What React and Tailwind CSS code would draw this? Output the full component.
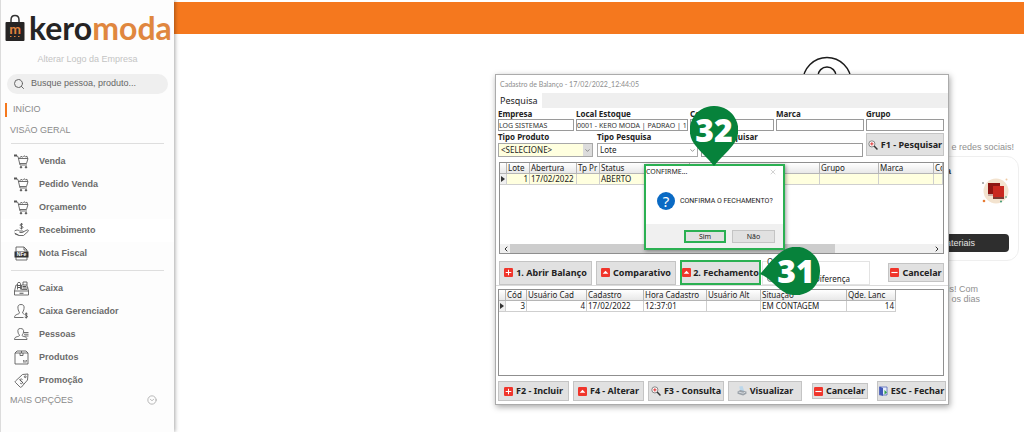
import { ChevronDown, CircleChevronDown, Search, X } from 'lucide-react';

const NOTO = "font-['Noto_Sans','Open_Sans',sans-serif]";

function MenuSvg({ children }) {
    return (
        <svg viewBox="0 0 30 30" className="h-[15px] w-[15px] shrink-0" fill="none" stroke="#555" strokeWidth="1.7" aria-hidden="true">
            {children}
        </svg>
    );
}

function CartIcon() {
    return (
        <MenuSvg>
            <path d="M5 3.5 8 5l4 17h14" />
            <path d="M9 9h19l-3 10H11.500" />
            <path d="M11 8.500l3-4 3 2 3-3 3 2 3-1 1 4" />
            <path d="M0 3h6" strokeWidth="4" />
            <circle cx="14" cy="26.500" r="1.600" fill="#333" />
            <circle cx="24" cy="26.500" r="1.600" fill="#333" />
        </MenuSvg>
    );
}

function HandMoneyIcon() {
    return (
        <MenuSvg>
            <path d="M18 3c-2-2-6-1-6 1.200 0 3 6 1.500 6 4.500 0 2.300-4.500 3-6.500 1M15 0v13" />
            <path d="M1 16c4-3 8-2 10 0h6c2 0 2 3 0 3h-6M18 18l8-4c2-1 4 1 2 3l-9 8H10l-8-3M1 20l8 4" />
        </MenuSvg>
    );
}

function NfeIcon() {
    return (
        <MenuSvg>
            <path d="M4 12V2h16l6 6v4M4 22v6h22v-6M20 2v6h6" />
            <rect x="1" y="11" width="28" height="12" fill="#333" stroke="none" />
            <text x="15" y="20.500" textAnchor="middle" fontSize="10" fontWeight="700" fontFamily="Liberation Sans, sans-serif" fill="#fff" stroke="none">NFe</text>
        </MenuSvg>
    );
}

function RegisterIcon() {
    return (
        <MenuSvg>
            <path d="M1 20h28v8H1zM1 20l3-12h4M29 20l-2-9" />
            <path d="M7 17V5c0-3 6-3 6 0v12M15 17V8h11v9zM18 8V2h8v6" />
            <path d="M7 9h6M7 13h6M17 11h7M17 14h7M11 24.500h8" strokeWidth="2" />
        </MenuSvg>
    );
}

function PersonMoneyIcon() {
    return (
        <MenuSvg>
            <path d="M14 1c-5 0-7 3-6 8 0 4 3 7 3 9-1 3-10 2-10 9h18M14 1c5 0 7 3 6 8 0 4-3 7-3 9 1 1 2 1.500 3 2" />
            <path d="M27 20c-2-1.500-5-1-5 1s5 1.500 5 4-3.500 2.500-5.500 1M24.500 17v12" strokeWidth="2" />
        </MenuSvg>
    );
}

function PersonListIcon() {
    return (
        <MenuSvg>
            <path d="M13 3c-5 0-6 3-5 7 0 4 3 5 3 7-1 3-10 1-10 8h25c0-7-8-5-10-8 0-2 3-3 3-7 1-4-1-7-6-7z" />
            <path d="M20 11h9M20 14.500h9M21 18h8" />
        </MenuSvg>
    );
}

function BoxIcon() {
    return (
        <MenuSvg>
            <path d="M2 6h26v22H2zM2 6l4-4h18l4 4M12 6v5h6V6M15 2v4" />
            <path d="M18 24h7M19 20v3M22 20v3M25 20v3" strokeWidth="1.500" />
        </MenuSvg>
    );
}

function TagIcon() {
    return (
        <MenuSvg>
            <path d="M28 2 17 3 3 16c-1 1-1 2 0 3l9 9c1 1 2 1 3 0l12-14z" />
            <circle cx="22.500" cy="7.500" r="1.800" />
            <path d="M17 13c-2-2-5-1-5 1s5 2 5 5-3 3-5 1M11 13l8 8" />
        </MenuSvg>
    );
}

const salesItems = [
    { label: 'Venda', Icon: CartIcon },
    { label: 'Pedido Venda', Icon: CartIcon },
    { label: 'Orçamento', Icon: CartIcon },
    { label: 'Recebimento', Icon: HandMoneyIcon, active: true },
    { label: 'Nota Fiscal', Icon: NfeIcon },
];

const manageItems = [
    { label: 'Caixa', Icon: RegisterIcon },
    { label: 'Caixa Gerenciador', Icon: PersonMoneyIcon },
    { label: 'Pessoas', Icon: PersonListIcon },
    { label: 'Produtos', Icon: BoxIcon },
    { label: 'Promoção', Icon: TagIcon },
];

function MenuList({ items }) {
    return (
        <ul>
            {items.map(({ label, Icon, active }) => (
                <li key={label}>
                    <a href="#" className={`flex h-[23px] items-center gap-[10px] pl-[13px] text-[9px] font-bold text-[#6b6b6b] ${active ? 'bg-white' : ''}`}>
                        <Icon />
                        {label}
                    </a>
                </li>
            ))}
        </ul>
    );
}

function Logo() {
    return (
        <div className="flex h-8 items-end gap-1 pl-1">
            <svg viewBox="0 0 20 28" className="mb-[2px] h-7 w-5 shrink-0" aria-hidden="true">
                <path d="M6 10V6c0-6 8-6 8 0v4" fill="none" stroke="#333" strokeWidth="1.500" />
                <rect x="0.500" y="8" width="19" height="19" rx="1" fill="#262424" />
                <text x="10" y="19.500" textAnchor="middle" fontSize="14" fontWeight="700" fontFamily="Lato, sans-serif" fill="#e0823d">m</text>
                <path d="M5 22.500h10" stroke="#e0823d" strokeDasharray="1.500 2.500" />
            </svg>
            <span className="font-['Lato',sans-serif] text-[32px] leading-8 font-bold text-[#262424]">
                kero<span className="text-[#e0873f]">moda</span>
            </span>
        </div>
    );
}

function Sidebar() {
    return (
        <aside className="z-10 min-h-screen w-[174px] shrink-0 border-l border-[#dcdcdc] bg-[#fdfdfd] pt-3 shadow-[1px_0_4px_rgba(0,0,0,0.35)]">
            <Logo />
            <p className="mt-[10px] text-center text-[9px] leading-[10px] text-[#c4c4c4]">Alterar Logo da Empresa</p>
            <label className="mx-[6px] mt-[10px] flex h-5 items-center gap-[6px] rounded-full bg-[#efefef] px-[6px]">
                <Search className="h-3 w-3 shrink-0 text-[#666]" />
                <input
                    type="text"
                    aria-label="Busca"
                    placeholder="Busque pessoa, produto..."
                    className="w-full min-w-0 bg-transparent text-[9px] outline-none placeholder:text-[#666]"
                />
            </label>
            <a href="#" className="mt-[9px] ml-1 flex h-[14px] items-center border-l-2 border-[#f5781e] pl-[6px] text-[9px] text-[#8a8a8a]">INÍCIO</a>
            <h2 className="mt-2 pl-[9px] text-[9px] leading-[10px] text-[#8a8a8a]">VISÃO GERAL</h2>
            <hr className="mx-[10px] mt-2 mb-[6px] border-[#dedede]" />
            <MenuList items={salesItems} />
            <hr className="mx-[10px] mt-[5px] mb-[6px] border-[#dedede]" />
            <MenuList items={manageItems} />
            <button className="mt-[3px] flex w-full items-center justify-between pr-[17px] pl-[9px] text-[9px] leading-[10px] text-[#8a8a8a]">
                MAIS OPÇÕES
                <CircleChevronDown className="h-[10px] w-[10px] text-[#aaa]" />
            </button>
        </aside>
    );
}

function Backdrop() {
    return (
        <main className="min-w-0 flex-1 pt-[2px]">
            <header className="h-8 bg-[#f5781e]" />
            <section className="flex flex-col items-end text-[9px] leading-[10px] text-[#8f8f8f]">
                <svg viewBox="0 0 50 50" className="mt-[22px] mr-[172px] h-[50px] w-[50px]" fill="none" stroke="#1c1c1c" strokeWidth="1.500" aria-hidden="true">
                    <circle cx="25" cy="25.500" r="24" />
                    <circle cx="25" cy="20" r="9" />
                </svg>
                <p className="mt-9 mr-[10px]">blog e redes sociais!</p>
                <div className="mt-1 mr-[5px] flex h-[105px] w-[216px] flex-col justify-between rounded-xl border border-[#efefef] px-[9px] py-2">
                    <div className="flex items-start justify-between">
                        <h3 className="w-[138px] pt-px text-right font-bold text-[#333]">Biblioteca</h3>
                        <svg viewBox="0 0 27 27" className="mt-3 h-[27px] w-[27px]" aria-hidden="true">
                            <circle cx="14" cy="14" r="12.500" fill="#f3e3cf" />
                            <rect x="6" y="6" width="12" height="13" fill="#8e1512" />
                            <path d="M6 17h12v2H6z" fill="#c9a9a0" />
                            <rect x="11" y="9" width="11" height="12" fill="#c9281f" />
                            <path d="M11 20h11v2H11z" fill="#7a3b35" />
                            <circle cx="2" cy="24" r="1.300" fill="#e77b33" />
                            <circle cx="1" cy="6" r="0.800" fill="#555" />
                            <circle cx="24.500" cy="2.500" r="1" fill="#efc9a2" />
                            <circle cx="19" cy="24.500" r="1" fill="#3d9a76" />
                            <circle cx="24" cy="20" r="0.800" fill="#3d9a76" />
                        </svg>
                    </div>
                    <a href="#" className="flex h-[18px] items-center rounded-sm bg-[#2e2e2e] pr-[34px] text-[#e5e5e5]">
                        <span className="w-full text-right">materiais</span>
                    </a>
                </div>
                <p className="mt-[23px] mr-[44px] w-[160px] text-right">
                    <span className="block pr-[2px]">mais! Com</span>
                    todos os dias
                </p>
            </section>
        </main>
    );
}

function RedIcon({ kind }) {
    return (
        <svg viewBox="0 0 16 16" className="h-[9px] w-[9px] shrink-0" aria-hidden="true">
            <rect width="16" height="16" rx="2" fill="#f0352b" />
            {kind === 'plus' && <path d="M8 3v10M3 8h10" stroke="#fff" strokeWidth="1.800" />}
            {kind === 'up' && <path d="M8 5l5 5H3z" fill="#fff" />}
            {kind === 'minus' && <path d="M2.500 8h11" stroke="#fff" strokeWidth="2" />}
        </svg>
    );
}

function ZoomIcon() {
    return (
        <svg viewBox="0 0 18 18" className="h-[10px] w-[10px] shrink-0" fill="none" aria-hidden="true">
            <circle cx="7" cy="7" r="5.500" fill="#fff" stroke="#666" strokeWidth="1.400" />
            <path d="M7 4v6M4 7h6" stroke="#d33" strokeWidth="1.800" />
            <path d="M11 11l6 6" stroke="#333" strokeWidth="2.600" />
        </svg>
    );
}

function PrinterIcon() {
    return (
        <svg viewBox="0 0 18 18" className="h-[10px] w-[10px] shrink-0" aria-hidden="true">
            <path d="M4 1l6-1 3 9-7 1z" fill="#bcd7ea" />
            <path d="M1 10l5-3 11 3v4l-6 3L1 14z" fill="#9aa1a8" />
            <path d="M3 11l8 2 4-2" fill="none" stroke="#e3e7ea" strokeWidth="1.500" />
        </svg>
    );
}

function DoorIcon() {
    return (
        <svg viewBox="0 0 18 20" className="h-[10px] w-[9px] shrink-0" aria-hidden="true">
            <path d="M1 2h15v16H1z" fill="#e6eefb" stroke="#4b5fb5" strokeWidth="1.500" />
            <path d="M1 1l7 3v16l-7-3z" fill="#4158b8" />
            <path d="M11 8l5 5-5 4z" fill="#2fa343" />
        </svg>
    );
}

function ActionButton({ icon, children, className = 'h-[19px]' }) {
    return (
        <button className={`flex shrink-0 items-center justify-center gap-[3px] border border-[#c4c4c4] bg-[#e1e1e1] text-[9px] leading-[10px] font-bold whitespace-nowrap ${className}`}>
            {icon}
            {children}
        </button>
    );
}

function Field({ label, value, className }) {
    return (
        <label className={`flex flex-col text-[8px] leading-[10px] ${className}`}>
            <span className="font-bold">{label}</span>
            <input type="text" defaultValue={value} className="h-3 w-full border border-[#9a9a9a] bg-white text-[7px] text-[#333] outline-none" />
        </label>
    );
}

function SelectField({ label, value, className, selectClass, arrowClass }) {
    return (
        <label className={`flex flex-col text-[8px] leading-[10px] ${className}`}>
            <span className="font-bold">{label}</span>
            <span className="relative mt-px block">
                <select className={`block h-[14px] w-full appearance-none border border-[#a8a8a8] pl-[2px] text-[8px] leading-[10px] outline-none ${selectClass}`}>
                    <option>{value}</option>
                </select>
                <span className={`pointer-events-none absolute inset-y-px right-px flex w-[9px] items-center justify-center ${arrowClass}`}>
                    <ChevronDown className="h-[7px] w-[7px] text-[#555]" />
                </span>
            </span>
        </label>
    );
}

function DataGrid({ columns, row, rowClass = '', tableClass = '' }) {
    return (
        <table className={`table-fixed border-separate border-spacing-0 text-[8px] leading-[10px] text-[#222] ${tableClass}`}>
            <colgroup>
                {columns.map((col, i) => <col key={i} className={col.width} />)}
            </colgroup>
            <thead>
                <tr className="bg-linear-to-b from-white to-[#e6e6e6]">
                    {columns.map((col, i) => (
                        <th key={i} className="h-[11px] overflow-hidden border-r border-b border-[#b5b5b5] p-0 pl-px text-left font-normal whitespace-nowrap">{col.title}</th>
                    ))}
                </tr>
            </thead>
            <tbody>
                <tr>
                    {columns.map((col, i) => (
                        <td key={i} className={`h-[11px] overflow-hidden border-r border-b border-[#cfcfcf] p-0 px-px whitespace-nowrap ${col.right ? 'text-right' : ''} ${i === 0 ? 'bg-[#f0f0f0]' : rowClass}`}>
                            {i === 0 ? (
                                <svg viewBox="0 0 4 6" className="mx-auto h-[6px] w-1" aria-hidden="true"><path d="M0 0l4 3-4 3z" fill="#333" /></svg>
                            ) : row[i - 1]}
                        </td>
                    ))}
                </tr>
            </tbody>
        </table>
    );
}

const lotColumns = [
    { title: '', width: 'w-[7px]' },
    { title: 'Lote', width: 'w-[23px]', right: true },
    { title: 'Abertura', width: 'w-[47px]' },
    { title: 'Tp Pr', width: 'w-[23px]' },
    { title: 'Status', width: 'w-[90px]' },
    { title: '', width: 'w-[130px]' },
    { title: 'Grupo', width: 'w-[59px]' },
    { title: 'Marca', width: 'w-[55px]' },
    { title: 'Co', width: '' },
];

const countColumns = [
    { title: '', width: 'w-[7px]' },
    { title: 'Cód', width: 'w-[21px]', right: true },
    { title: 'Usuário Cad', width: 'w-[60px]', right: true },
    { title: 'Cadastro', width: 'w-[57px]' },
    { title: 'Hora Cadastro', width: 'w-[63px]' },
    { title: 'Usuário Alt', width: 'w-[54px]' },
    { title: 'Situação', width: 'w-[86px]' },
    { title: 'Qde. Lanc', width: 'w-[49px]', right: true },
];

function BalanceWindow() {
    return (
        <div className={`absolute top-[74px] left-[495px] z-20 w-[454px] border border-[#ababab] bg-white text-[#222] shadow-[1px_2px_6px_rgba(0,0,0,0.35)] ${NOTO}`}>
            <h1 className="h-[18px] pl-1 font-['Lato',sans-serif] text-[7px] leading-[18px] text-[#8d8d8d]">Cadastro de Balanço - 17/02/2022_12:44:05</h1>
            <div className="flex h-[15px] bg-[#efefef]" role="tablist">
                <button role="tab" aria-selected="true" className="bg-white px-1 text-[9px] leading-[14px]">Pesquisa</button>
            </div>

            <div className="px-[2px] pt-px">
                <div className="flex gap-[2px] pr-[2px]">
                    <Field label="Empresa" value="LOG SISTEMAS" className="w-[76px]" />
                    <Field label="Local Estoque" value="0001 - KERO MODA | PADRAO | 1" className="w-[112px]" />
                    <Field label="Coleção" value="" className="w-[84px]" />
                    <Field label="Marca" value="" className="w-[88px]" />
                    <Field label="Grupo" value="" className="min-w-0 flex-1" />
                </div>
                <div className="mt-px flex items-start pr-[2px]">
                    <SelectField label="Tipo Produto" value="<SELECIONE>" className="mr-1 w-[95px]" selectClass="bg-[#ffffdf]" arrowClass="bg-[#dcdcdc]" />
                    <SelectField label="Tipo Pesquisa" value="Lote" className="mr-[3px] w-[101px]" selectClass="bg-white" arrowClass="bg-white" />
                    <label className="flex w-[162px] flex-col text-[8px] leading-[10px]">
                        <span className="pl-[18px] font-bold">Pesquisar</span>
                        <input type="text" className="mt-px h-[14px] w-full border border-[#9a9a9a] bg-white outline-none" />
                    </label>
                    <ActionButton icon={<ZoomIcon />} className="mt-px ml-[3px] h-[23px] min-w-0 flex-1">F1 - Pesquisar</ActionButton>
                </div>

                <div className="mt-[5px] mr-[2px] ml-px flex h-[92px] flex-col justify-between border border-[#8f8f8f] bg-white">
                    <DataGrid columns={lotColumns} row={['1', '17/02/2022', '', 'ABERTO', '', '', '', '']} rowClass="bg-[#ffffdf]" tableClass="w-full" />
                    <div className="flex h-[9px] items-center bg-[#f0f0f0] px-[2px]">
                        <ChevronDown className="h-2 w-2 rotate-90 text-[#333]" strokeWidth={3} />
                        <div className="h-full w-[325px] bg-[#cdcdcd]" />
                        <ChevronDown className="ml-auto h-2 w-2 -rotate-90 text-[#333]" strokeWidth={3} />
                    </div>
                </div>
            </div>

            <div className="mt-[6px] flex h-[26px] items-center border-b border-[#dadada] px-[3px]">
                <ActionButton icon={<RedIcon kind="plus" />} className="mr-1 h-6 w-[93px]">1. Abrir Balanço</ActionButton>
                <ActionButton icon={<RedIcon kind="up" />} className="mr-1 h-6 w-[80px]">Comparativo</ActionButton>
                <button className="flex h-[25px] w-[81px] items-center justify-center gap-[2px] border-2 border-[#2bb052] bg-[#e1e1e1] text-[9px] font-bold whitespace-nowrap">
                    <RedIcon kind="up" />
                    2. Fechamento
                </button>
                <fieldset className="relative ml-px flex h-6 w-[108px] items-end border border-[#e3e3e3] pl-1">
                    <legend className="absolute -top-[5px] left-1 bg-white text-[8px] leading-[10px]">Opções</legend>
                    <label className="flex w-full items-center gap-[2px] text-[8px] leading-[11px]">
                        <input type="radio" name="opcao" className="h-[7px] w-[7px]" />
                        <span className="flex-1 pr-[19px] text-right">Diferença</span>
                    </label>
                </fieldset>
                <ActionButton icon={<RedIcon kind="minus" />} className="mr-px ml-auto h-[19px] w-[56px]">Cancelar</ActionButton>
            </div>

            <div className="mx-[2px] mt-[3px] mr-1 h-[87px] border border-[#8f8f8f]">
                <DataGrid columns={countColumns} row={['3', '4', '17/02/2022', '12:37:01', '', 'EM CONTAGEM', '14']} tableClass="w-[397px]" />
            </div>

            <div className="flex items-center px-[2px] pt-[5px] pb-[3px]">
                <ActionButton icon={<RedIcon kind="plus" />} className="mr-1 h-5 w-[71px]">F2 - Incluir</ActionButton>
                <ActionButton icon={<RedIcon kind="up" />} className="mr-1 h-5 w-[71px]">F4 - Alterar</ActionButton>
                <ActionButton icon={<ZoomIcon />} className="mr-1 h-5 w-[76px]">F3 - Consulta</ActionButton>
                <ActionButton icon={<PrinterIcon />} className="h-5 w-[74px]">Visualizar</ActionButton>
                <ActionButton icon={<RedIcon kind="minus" />} className="mx-auto h-4 w-[56px]">Cancelar</ActionButton>
                <ActionButton icon={<DoorIcon />} className="h-5 w-[69px]">ESC - Fechar</ActionButton>
            </div>
        </div>
    );
}

function ConfirmDialog() {
    return (
        <div role="dialog" aria-label="Confirme" className={`absolute top-[164px] left-[644px] z-30 w-[141px] border-2 border-[#2bb052] bg-white text-[#222] shadow-[1px_1px_4px_rgba(0,0,0,0.4)] ${NOTO}`}>
            <div className="flex h-3 items-center justify-between pr-[6px] text-[7px]">
                <span>CONFIRME...</span>
                <button aria-label="Fechar"><X className="h-2 w-2 text-[#bbb]" /></button>
            </div>
            <div className="flex h-[46px] items-center gap-[5px] pl-[11px]">
                <span className="flex h-[18px] w-[18px] shrink-0 items-center justify-center rounded-full bg-[#0a6ac4] text-[15px] leading-none text-white">?</span>
                <p className="font-['Roboto',sans-serif] text-[7px] whitespace-nowrap">CONFIRMA O FECHAMENTO?</p>
            </div>
            <div className="flex h-6 items-center justify-end gap-[6px] bg-[#f0f0f0] pr-2">
                <button className="h-[13px] w-[42px] border-2 border-[#2bb052] bg-[#e1e1e1] text-[7px] leading-[9px]">Sim</button>
                <button className="h-[13px] w-[43px] border border-[#c4c4c4] bg-[#e1e1e1] text-[7px] leading-[11px]">Não</button>
            </div>
        </div>
    );
}

function StepPin({ number, path, viewBox, className, numberClass }) {
    return (
        <div className={`absolute z-40 ${className}`}>
            <svg viewBox={viewBox} className="h-full w-full" aria-hidden="true">
                <path d={path} fill="#07823b" />
            </svg>
            <span className={`absolute flex h-12 w-12 items-center justify-center font-['Open_Sans',sans-serif] text-[32px] leading-none font-extrabold text-white ${numberClass}`}>{number}</span>
        </div>
    );
}

export default function App() {
    return (
        <div className="relative flex min-h-screen overflow-hidden bg-white font-['Liberation_Sans',Arial,sans-serif]">
            <Sidebar />
            <Backdrop />
            <BalanceWindow />
            <ConfirmDialog />
            <StepPin
                number="32"
                viewBox="0 0 48 60"
                path="M24 0a24 24 0 0 1 19 39C37 47 30 52 24 60 18 52 11 47 5 39A24 24 0 0 1 24 0z"
                className="top-[106px] left-[690px] h-[60px] w-12"
                numberClass="top-0 left-0"
            />
            <StepPin
                number="31"
                viewBox="0 0 60 48"
                path="M60 24a24 24 0 0 1-39 19C13 37 8 30 0 27 8 18 13 11 21 5A24 24 0 0 1 60 24z"
                className="top-[247px] left-[760px] h-12 w-[60px]"
                numberClass="top-0 right-0"
            />
        </div>
    );
}
